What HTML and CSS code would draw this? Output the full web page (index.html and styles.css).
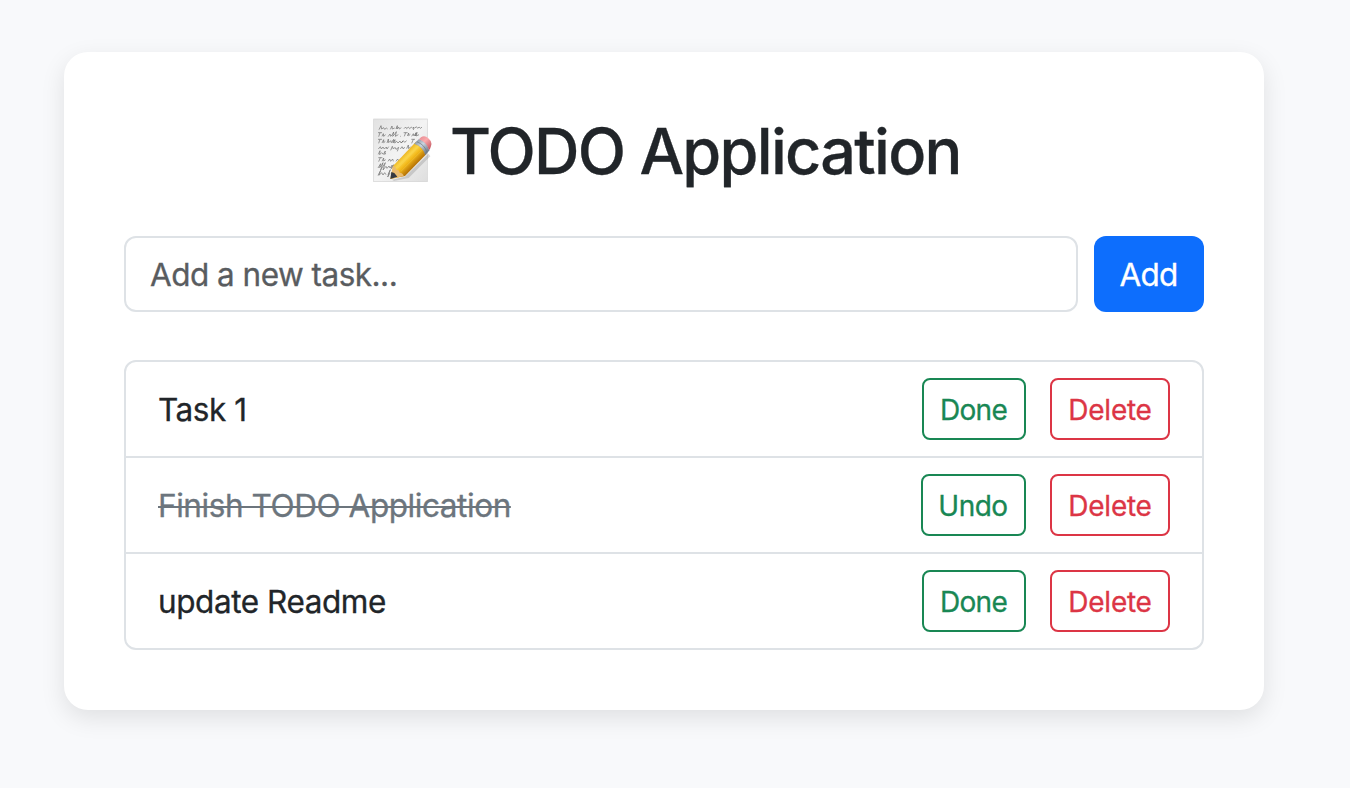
FILE: index.html
```html
<!DOCTYPE html>
<html lang="en">
<head>
<meta charset="utf-8">
<title>TODO Application</title>
<link rel="stylesheet" href="styles.css">
</head>
<body>
<main class="card">
  <h1 class="title">
    <svg class="memo" viewBox="36 36 180 198" aria-hidden="true">
      <defs>
        <linearGradient id="paper" x1="0" y1="0" x2="1" y2="1">
          <stop offset="0" stop-color="#e2e2e2"/>
          <stop offset=".5" stop-color="#f3f3f3"/>
          <stop offset="1" stop-color="#dedede"/>
        </linearGradient>
        <linearGradient id="wood" gradientUnits="userSpaceOnUse" x1="130" y1="146" x2="164" y2="180">
          <stop offset="0" stop-color="#e9b01f"/>
          <stop offset=".3" stop-color="#fbd548"/>
          <stop offset=".6" stop-color="#f2b617"/>
          <stop offset="1" stop-color="#b97708"/>
        </linearGradient>
        <linearGradient id="metal" gradientUnits="userSpaceOnUse" x1="168" y1="108" x2="200" y2="146">
          <stop offset="0" stop-color="#8997a5"/>
          <stop offset=".4" stop-color="#cbd5df"/>
          <stop offset="1" stop-color="#66727f"/>
        </linearGradient>
        <linearGradient id="rubber" gradientUnits="userSpaceOnUse" x1="180" y1="98" x2="210" y2="130">
          <stop offset="0" stop-color="#e98f95"/>
          <stop offset=".4" stop-color="#fba9ac"/>
          <stop offset="1" stop-color="#c65d66"/>
        </linearGradient>
      </defs>
      <rect x="41" y="42" width="161" height="188" fill="url(#paper)" stroke="#d2d2d2" stroke-width="2"/>
      <g class="ink">
        <path d="M57 74l6-12 2 10 6-4 3 5 5-4 4 3M91 73l5-10 1 9 7-3M108 72l4-10-1 10 5-6 2 6 6-4M132 71l5-5 3 5 5-5 4 5 5-5 4 4 4-4-2 9M164 70l5-5 4 5 4-4 5 4 4-4"/>
        <path d="M54 83h12M60 83l-4 12M66 94l4-8 1 8 6-5M84 95l6-8 2 7 5-5 4-8-3 13 6-6 5-8-3 14 9-5M121 94h2M131 83h12M137 83l-4 11M142 93l4-9v8l5-4M155 94l5-8 2 7 6-10-2 10 5-11-2 11 8-4"/>
        <path d="M54 103h12M60 103l-4 12M66 114l5-10v9l5-4M81 114l4-12 1 11 6-6 2 6 7-10-2 11 6-10-1 10 6-5 4 5 6-6 3 6 6-6-4 5 5-6 4 5 6-5M154 103h11M160 103l-5 12"/>
        <path d="M55 132l6-7 3 7 5-6 4 6 6-6 2 6 5-7M92 136l5-12 3 8 5-5 3 6 8-6-4 12M121 132l5-7 4 7 4-6M140 131l5-11 1 11 6-6"/>
        <path d="M55 148l5-11-1 12 6-6 5 5 6-10-2 10 4-3"/>
        <path d="M55 158h12M61 158l-5 12M66 169l5-10v9l6-4M84 169l5-7 3 7 6-7 2 7M108 169l5-7 4 7 6-7 3 7"/>
        <path d="M54 189l8-13-3 12 5-6 5-9-7 22 14-22-7 22 9-11 3 6 6-7 3 6 7-9-3 11 7-12-2 10"/>
        <path d="M54 211l8-15-5 15 8-8 4 7 5-7 4 6M84 209l7-15-8 22 7-12"/>
      </g>
      <path d="M96 224l39-9 71-69 5 8-65 65-44 9z" fill="#777" opacity=".28"/>
      <path d="M91 222l8-39 69-73 32 36-65 67z" fill="url(#wood)"/>
      <path d="M91 222l8-39q8 1 10 11 9 0 10 9 10 1 12 10z" fill="#e9bb70"/>
      <path d="M91 222l3-21 9 3 9 11z" fill="#353942"/>
      <path d="M112 190l65-66M122 200l65-65" stroke="#fff09a" stroke-width="2" opacity=".3"/>
      <path d="M163 116l14-13q24 8 31 33l-12 14q-7-26-33-34z" fill="url(#metal)" stroke="#8792a0"/>
      <path d="M170 110q24 9 31 32" fill="none" stroke="#687582" stroke-width="2"/>
      <path d="M177 103l6-6q11-7 22 3 13 11 8 23-2 9-6 12-7-24-30-32z" fill="url(#rubber)"/>
    </svg>
    <span class="title-text">TODO Application</span>
  </h1>
  <form class="add-form">
    <input class="task-input" type="text" placeholder="Add a new task..." aria-label="New task">
    <button class="btn btn-add" type="button">Add</button>
  </form>
  <ul class="tasks">
    <li class="task">
      <span class="task-name">Task 1</span>
      <button class="btn btn-small btn-done" type="button">Done</button>
      <button class="btn btn-small btn-delete" type="button">Delete</button>
    </li>
    <li class="task">
      <span class="task-name completed">Finish TODO Application</span>
      <button class="btn btn-small btn-done btn-undo" type="button">Undo</button>
      <button class="btn btn-small btn-delete" type="button">Delete</button>
    </li>
    <li class="task">
      <span class="task-name">update Readme</span>
      <button class="btn btn-small btn-done" type="button">Done</button>
      <button class="btn btn-small btn-delete" type="button">Delete</button>
    </li>
  </ul>
</main>
</body>
</html>
```
FILE: styles.css
```css
* { box-sizing: border-box; }

body {
  margin: 0;
  min-height: 788px;
  background: #f8f9fb;
  color: #212529;
  font-family: Inter, "Liberation Sans", sans-serif;
  font-size: 31.5px;
  font-weight: 400;
  line-height: 48px;
  -webkit-text-stroke: .3px;
  overflow: hidden;
}

.card {
  width: 1200px;
  height: 658px;
  margin: 52px 0 0 64px;
  padding: 60px;
  background: #fff;
  border-radius: 24px;
  box-shadow: 0 8px 24px rgba(0, 0, 0, .1);
}

.title {
  display: flex;
  align-items: center;
  height: 76px;
  margin: 0 0 48px;
  padding-left: 248px;
  font-size: 63px;
  line-height: 76px;
  font-weight: 500;
  letter-spacing: -1.73px;
  white-space: nowrap;
}

.title-text { padding-top: 2px; }

.memo {
  flex: none;
  width: 60px;
  height: 66px;
  margin-right: 18px;
}

.ink {
  fill: none;
  stroke: #4c4c4c;
  stroke-width: 2;
  stroke-linejoin: round;
  opacity: .8;
}

.add-form {
  display: flex;
  gap: 16px;
  margin: 0 0 48px;
}

.task-input {
  flex: 1;
  min-width: 0;
  height: 76px;
  padding: 0 24px;
  border: 2px solid #dee2e6;
  border-radius: 12px;
  background: #fff;
  color: #212529;
  font: inherit;
  letter-spacing: -.52px;
  -webkit-text-stroke: .3px;
}

.task-input::placeholder {
  color: #595c5f;
  opacity: 1;
}

.btn {
  flex: none;
  padding: 2px 0 0;
  font: inherit;
  text-align: center;
  white-space: nowrap;
  -webkit-text-stroke: .3px;
}

.btn-add {
  width: 110px;
  height: 76px;
  padding-right: 1px;
  border: 0;
  border-radius: 12px;
  background: #0d6efd;
  color: #fff;
  letter-spacing: -.7px;
}

.tasks {
  margin: 0;
  padding: 0;
  border: 2px solid #dee2e6;
  border-radius: 12px;
  list-style: none;
}

.task {
  display: flex;
  align-items: center;
  height: 96px;
  padding: 0 32px;
  border-bottom: 2px solid #dee2e6;
}

.task:last-child {
  height: 94px;
  border-bottom: 0;
}

.task-name {
  margin-right: auto;
  padding-top: 2px;
  letter-spacing: -.43px;
}

.completed {
  color: #6c757d;
  text-decoration: line-through;
  text-decoration-thickness: 2px;
}

.btn-small {
  height: 62px;
  border: 2px solid;
  border-radius: 8px;
  background: transparent;
  font-size: 28px;
  line-height: 42px;
}

.btn-done {
  width: 104px;
  margin-right: 24px;
  padding-right: 1px;
  color: #198754;
  letter-spacing: -.7px;
}

.btn-undo {
  width: 105px;
  letter-spacing: -.5px;
}

.btn-delete {
  width: 120px;
  color: #dc3545;
  letter-spacing: -.25px;
}
```
